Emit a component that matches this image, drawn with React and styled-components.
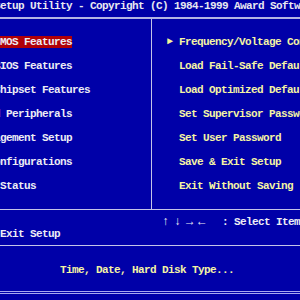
import React from "react";
import styled, { createGlobalStyle } from "styled-components";

const Global = createGlobalStyle`
    html, body {
        margin: 0;
        padding: 0;
        background: #0000a8;
    }
`

const leftItems = [
    "Standard CMOS Features",
    "Advanced BIOS Features",
    "Advanced Chipset Features",
    "Integrated Peripherals",
    "Power Management Setup",
    "PnP/PCI Configurations",
    "PC Health Status",
];

const rightItems = [
    { label: "Frequency/Voltage Control", sub: true },
    { label: "Load Fail-Safe Defaults" },
    { label: "Load Optimized Defaults" },
    { label: "Set Supervisor Password" },
    { label: "Set User Password" },
    { label: "Save & Exit Setup" },
    { label: "Exit Without Saving" },
];

export default function App() {
    return (
        <Screen>
            <Global />
            <Canvas>
                <Title>CMOS Setup Utility - Copyright (C) 1984-1999 Award Software</Title>

                <Frame>
                    <Menu>
                        <Column>
                            {leftItems.map((t, i) => (
                                <Item key={t}>
                                    <Pointer>►</Pointer>
                                    <Label $active={i === 0}>{t}</Label>
                                </Item>
                            ))}
                        </Column>
                        <Column $right>
                            {rightItems.map((it) => (
                                <Item key={it.label}>
                                    <Pointer>{it.sub ? "►" : ""}</Pointer>
                                    <Label $yellow>{it.label}</Label>
                                </Item>
                            ))}
                        </Column>
                    </Menu>

                    <Help>
                        <HelpRow>
                            <span>Esc : Quit</span>
                            <span>
                                <Arrows>
                                    <Key>↑</Key><Key>↓</Key><Key>→</Key><Key>←</Key>
                                </Arrows>
                                : Select Item
                            </span>
                        </HelpRow>
                        <HelpRow>
                            <span>F10 : Save &amp; Exit Setup</span>
                        </HelpRow>
                    </Help>

                    <Status>Time, Date, Hard Disk Type...</Status>
                </Frame>
            </Canvas>
        </Screen>
    )
}

const Screen = styled.div`
    width: 300px;
    height: 300px;
    overflow: hidden;
    background-color: #0000a8;
    font-family: "Liberation Mono", "DejaVu Sans Mono", monospace;
    font-weight: bold;
    font-size: 11px;
    letter-spacing: -0.6px;
    line-height: 12px;
    color: #ececf4;
    white-space: pre;
`

const Canvas = styled.div`
    width: 480px;
    margin-left: -90px;
`

const Title = styled.div`
    height: 12px;
    padding-left: 54px;
    color: #e8e8f0;
`

const Frame = styled.div`
    margin-top: 5px;
    border-top: 2px solid #b4b4e4;
    border-bottom: 3px double #a8a8f0;
`

const Menu = styled.div`
    display: grid;
    grid-template-columns: 242px 1fr;
    border-bottom: 1px solid #c4c4e8;
`

const Column = styled.div`
    display: flex;
    flex-direction: column;
    gap: 12px;
    padding: 17px 0 17px ${p => p.$right ? "15px" : "18px"};
    border-right: ${p => p.$right ? "none" : "1px solid #c4c4e8"};
`

const Item = styled.div`
    display: flex;
    height: 12px;
`

const Pointer = styled.span`
    width: 12px;
    color: #f4f49c;
    font-size: 10px;
    letter-spacing: 0;
`

const Label = styled.span`
    background-color: ${p => p.$active ? "#b00008" : "transparent"};
    color: ${p => p.$yellow ? "#f4f4a4" : "#ececf4"};
`

const Help = styled.div`
    padding: 6px 0 5px 12px;
    border-bottom: 1px solid #c4c4e8;
`

const HelpRow = styled.div`
    display: grid;
    grid-template-columns: 240px 1fr;
    height: 12px;
    overflow: hidden;
`

const Arrows = styled.span`
    display: inline-flex;
    width: 60px;
`

const Key = styled.span`
    width: 12px;
    font-size: 12px;
    letter-spacing: 0;
`

const Status = styled.div`
    padding: 18px 0 15px 150px;
    height: 12px;
    color: #f4f4a4;
`
